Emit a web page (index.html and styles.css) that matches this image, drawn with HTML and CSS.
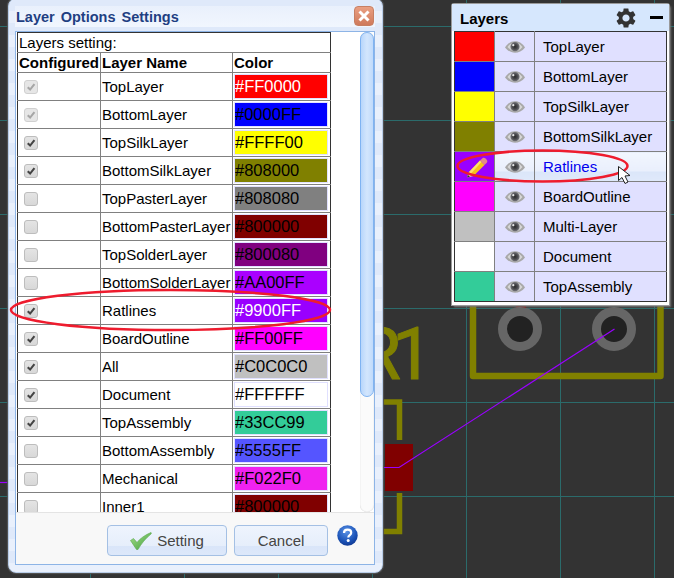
FILE: index.html
```html
<!DOCTYPE html>
<html lang="en">
<head>
<meta charset="utf-8">
<title>Layer Options Settings</title>
<link rel="stylesheet" href="styles.css">
</head>
<body>
<svg class="defs" width="0" height="0" aria-hidden="true">
  <defs>
    <symbol id="tick" viewBox="0 0 14 14"><path d="M3.2 7.2 6 10 11 3.6" fill="none" stroke="currentColor" stroke-width="2.4"/></symbol>
    <radialGradient id="iris"><stop offset="0" stop-color="#2c2c2c"/><stop offset=".55" stop-color="#4a4a4e"/><stop offset="1" stop-color="#77777c"/></radialGradient>
    <symbol id="eye" viewBox="0 0 20 12">
      <path d="M0 6.4C3 1.8 6.5 .3 10 .3s7 1.5 10 6.1c-3 3.8-6.500 5.300-10 5.300S3 10.200 0 6.400Z" fill="#a8a8a8"/>
      <path d="M2.500 6C5 2.700 7.500 1.800 10 1.800s5 .9 7.500 4.200C15 9 12.500 10 10 10S5 9 2.500 6Z" fill="#d6d6d6"/>
      <circle cx="10" cy="5.700" r="4.600" fill="url(#iris)"/>
      <circle cx="8.300" cy="4.200" r="1.100" fill="#e8e8e8"/>
    </symbol>
  </defs>
</svg>

<main class="canvas">
  <svg class="board" width="674" height="578" viewBox="0 0 674 578" aria-hidden="true">
    <text class="silk-text" x="356" y="379">R<tspan x="392">1</tspan></text>
    <path class="silk" d="M473 300V376H660.500V300"/>
    <path class="silk-thin" d="M375 402H399.500V440M399.500 493V531.500H375"/>
    <rect class="pad" x="385" y="444" width="28" height="47"/>
    <rect class="pad" x="516" y="300" width="10" height="8"/>
    <circle class="ring" cx="520" cy="329" r="17.500"/>
    <circle class="ring" cx="614" cy="329" r="17.500"/>
    <path class="rat" d="M370 467.500H399L614.500 329"/>
    <path class="rat" d="M0 482.500H10"/>
  </svg>

  <section class="dialog">
    <header class="dialog-title">
      <h1>Layer Options Settings</h1>
      <button class="close" type="button" aria-label="Close"><svg width="12" height="12" viewBox="0 0 12 12"><path d="M1.500 1.500 10.500 10.500M10.500 1.500 1.500 10.500" stroke="#fff" stroke-width="3"/></svg></button>
    </header>
    <div class="frame">
      <div class="scroller">
        <table class="opts">
          <colgroup><col class="col-a"><col class="col-b"><col class="col-c"></colgroup>
          <tr class="cap"><td colspan="3">Layers setting:</td></tr>
          <tr class="head"><th>Configured</th><th>Layer Name</th><th>Color</th></tr>
          <tr><td><span class="cb off-on"><svg><use href="#tick"/></svg></span></td><td>TopLayer</td><td><div class="sw c-ff0000 light">#FF0000</div></td></tr>
          <tr><td><span class="cb off-on"><svg><use href="#tick"/></svg></span></td><td>BottomLayer</td><td><div class="sw c-0000ff">#0000FF</div></td></tr>
          <tr><td><span class="cb"><svg><use href="#tick"/></svg></span></td><td>TopSilkLayer</td><td><div class="sw c-ffff00">#FFFF00</div></td></tr>
          <tr><td><span class="cb"><svg><use href="#tick"/></svg></span></td><td>BottomSilkLayer</td><td><div class="sw c-808000">#808000</div></td></tr>
          <tr><td><span class="cb"></span></td><td>TopPasterLayer</td><td><div class="sw c-808080">#808080</div></td></tr>
          <tr><td><span class="cb"></span></td><td>BottomPasterLayer</td><td><div class="sw c-800000">#800000</div></td></tr>
          <tr><td><span class="cb"></span></td><td>TopSolderLayer</td><td><div class="sw c-800080">#800080</div></td></tr>
          <tr><td><span class="cb"></span></td><td>BottomSolderLayer</td><td><div class="sw c-aa00ff">#AA00FF</div></td></tr>
          <tr><td><span class="cb"><svg><use href="#tick"/></svg></span></td><td>Ratlines</td><td><div class="sw c-9900ff light">#9900FF</div></td></tr>
          <tr><td><span class="cb"><svg><use href="#tick"/></svg></span></td><td>BoardOutline</td><td><div class="sw c-ff00ff">#FF00FF</div></td></tr>
          <tr><td><span class="cb"><svg><use href="#tick"/></svg></span></td><td>All</td><td><div class="sw c-c0c0c0">#C0C0C0</div></td></tr>
          <tr><td><span class="cb"><svg><use href="#tick"/></svg></span></td><td>Document</td><td><div class="sw c-ffffff">#FFFFFF</div></td></tr>
          <tr><td><span class="cb"><svg><use href="#tick"/></svg></span></td><td>TopAssembly</td><td><div class="sw c-33cc99">#33CC99</div></td></tr>
          <tr><td><span class="cb"></span></td><td>BottomAssembly</td><td><div class="sw c-5555ff">#5555FF</div></td></tr>
          <tr><td><span class="cb"></span></td><td>Mechanical</td><td><div class="sw c-f022f0">#F022F0</div></td></tr>
          <tr><td><span class="cb"></span></td><td>Inner1</td><td><div class="sw c-800000">#800000</div></td></tr>
        </table>
        <div class="track"><div class="thumb"></div></div>
      </div>
      <footer class="actions">
        <button class="btn btn-set" type="button">
          <svg width="22" height="18" viewBox="0 0 22 18"><defs><linearGradient id="chk" x1="0" y1="0" x2="1" y2="1"><stop offset="0" stop-color="#a8e08c"/><stop offset="1" stop-color="#3f9e3c"/></linearGradient></defs><path d="M.5 8.500 3.500 6.500 7 10.500C10 6.500 15 3 21 .5 21.500.8 21.500 1.500 21 2 15 7 11.500 11.500 8 17.500L6.500 17.500Z" fill="url(#chk)" stroke="#5aa84e" stroke-width=".6"/></svg>
          <span>Setting</span>
        </button>
        <button class="btn btn-cancel" type="button">Cancel</button>
        <svg class="help" width="21" height="21" viewBox="0 0 21 21"><defs><radialGradient id="hb" cx=".45" cy=".3" r=".8"><stop offset="0" stop-color="#5b93e6"/><stop offset=".6" stop-color="#1c54b8"/><stop offset="1" stop-color="#0c2f84"/></radialGradient></defs><circle cx="10.500" cy="10.500" r="10.200" fill="url(#hb)"/><path d="M7 8C7 5.800 8.500 4.700 10.600 4.700 12.800 4.700 14.200 5.900 14.200 7.700 14.200 10 11.300 10.200 11.300 12.500" fill="none" stroke="#fff" stroke-width="2.200"/><circle cx="11.200" cy="15.400" r="1.500" fill="#fff"/></svg>
      </footer>
    </div>
  </section>

  <section class="layers">
    <header class="layers-head">
      <h2>Layers</h2>
      <svg class="gear" width="24" height="24" viewBox="0 0 24 24"><path d="M19.14 12.94c.04-.3.06-.61.06-.94 0-.32-.02-.64-.07-.94l2.03-1.58c.18-.14.23-.41.12-.61l-1.92-3.32c-.12-.22-.37-.29-.59-.22l-2.39.96c-.5-.38-1.03-.7-1.62-.94l-.36-2.54c-.04-.24-.24-.41-.48-.41h-3.84c-.24 0-.43.17-.47.41l-.36 2.54c-.59.24-1.13.57-1.62.94l-2.39-.96c-.22-.08-.47 0-.59.22L2.74 8.870c-.12.21-.08.47.12.61l2.03 1.58c-.05.3-.09.63-.09.94s.02.64.07.94l-2.03 1.58c-.18.14-.23.41-.12.61l1.92 3.32c.12.22.37.29.59.22l2.39-.96c.5.38 1.03.7 1.62.94l.36 2.54c.05.24.24.41.48.41h3.840c.24 0 .44-.17.47-.41l.36-2.54c.59-.24 1.13-.56 1.62-.94l2.39.96c.22.08.47 0 .59-.22l1.92-3.32c.12-.22.07-.47-.12-.61l-2.010-1.58zM12 15.600c-1.980 0-3.600-1.620-3.600-3.600s1.620-3.600 3.600-3.600 3.600 1.620 3.600 3.600-1.620 3.600-3.600 3.600z" fill="#333"/></svg>
      <span class="minus"></span>
    </header>
    <table class="ltab">
      <colgroup><col class="l-a"><col class="l-b"><col class="l-c"></colgroup>
      <tr><td class="c-ff0000"></td><td class="e"><svg class="eye"><use href="#eye"/></svg></td><td>TopLayer</td></tr>
      <tr><td class="c-0000ff"></td><td class="e"><svg class="eye"><use href="#eye"/></svg></td><td>BottomLayer</td></tr>
      <tr><td class="c-ffff00"></td><td class="e"><svg class="eye"><use href="#eye"/></svg></td><td>TopSilkLayer</td></tr>
      <tr><td class="c-808000"></td><td class="e"><svg class="eye"><use href="#eye"/></svg></td><td>BottomSilkLayer</td></tr>
      <tr class="active">
        <td class="c-9900ff pencil-cell">
          <svg class="pencil" width="22" height="22" viewBox="0 0 22 22"><path d="M1 20.500 3 15 7.500 19Z" fill="#f3dfb0"/><path d="M1 20.500 2 18 4 19.800Z" fill="#333"/><path d="M3 15 14 3.500 18.500 8 7.500 19Z" fill="#f7c21d"/><path d="M3 15 14 3.500 15.500 5 5 16.500Z" fill="#fde36a"/><path d="M14 3.500 16.500 1.200C17.500.4 18.500.6 19.500 1.500L20.700 2.800C21.500 3.800 21.500 4.800 20.800 5.700L18.500 8Z" fill="#e58a86"/></svg>
        </td>
        <td class="e"><svg class="eye"><use href="#eye"/></svg></td><td>Ratlines</td>
      </tr>
      <tr><td class="c-ff00ff"></td><td class="e"><svg class="eye"><use href="#eye"/></svg></td><td>BoardOutline</td></tr>
      <tr><td class="c-c0c0c0"></td><td class="e"><svg class="eye"><use href="#eye"/></svg></td><td>Multi-Layer</td></tr>
      <tr><td class="c-ffffff"></td><td class="e"><svg class="eye"><use href="#eye"/></svg></td><td>Document</td></tr>
      <tr><td class="c-33cc99"></td><td class="e"><svg class="eye"><use href="#eye"/></svg></td><td>TopAssembly</td></tr>
    </table>
  </section>

  <svg class="notes" width="674" height="578" viewBox="0 0 674 578" aria-hidden="true">
    <ellipse cx="170.500" cy="310" rx="159.500" ry="20"/>
    <ellipse cx="542.500" cy="166" rx="85" ry="15.500"/>
    <path class="cursor" d="M618.500 166.500V180.500L622 177.500 625 183.500 628 182 625 176 630 175.500Z"/>
  </svg>
</main>
</body>
</html>
```
FILE: styles.css
```css
* { box-sizing: border-box; }
html, body { margin: 0; padding: 0; }
body { font-family: "Liberation Sans", Arial, sans-serif; background: #333; }
.defs { position: absolute; }

.canvas {
  position: relative;
  width: 674px;
  height: 578px;
  overflow: hidden;
  background-color: #333;
  background-image:
    linear-gradient(#2b6b6b 0 1px, transparent 1px),
    linear-gradient(90deg, #2b6b6b 0 1px, transparent 1px);
  background-size: 94px 94px;
  background-position: 90px 26px;
}

.board, .notes { position: absolute; left: 0; top: 0; }
.notes { pointer-events: none; }
.notes ellipse { fill: none; stroke: #ee1c2e; stroke-width: 2.500; }
.notes .cursor { fill: #fff; stroke: #222; stroke-width: 1; }

.silk { fill: none; stroke: #808000; stroke-width: 6.500; stroke-linejoin: round; }
.silk-thin { fill: none; stroke: #808000; stroke-width: 5.500; }
.silk-text { font-family: Roboto, "Liberation Sans", sans-serif; font-size: 73px; fill: #808000; stroke: #808000; stroke-width: 1; stroke-linejoin: round; }
.pad { fill: #800000; }
.ring { fill: #222; stroke: #666; stroke-width: 9; }
.rat { fill: none; stroke: #9900ff; stroke-width: 1.200; }

/* dialog */
.dialog {
  position: absolute;
  left: 8px;
  top: -2px;
  width: 375px;
  height: 575px;
  display: flex;
  flex-direction: column;
  padding: 0 7px 7px 6px;
  border-radius: 8px;
  border: 1px solid #b9cde8;
  box-shadow: 0 0 1px 1px #555;
  background: repeating-linear-gradient(#dfe9fa 0 12px, #e9f0fc 12px 24px);
}
.dialog-title {
  height: 32px;
  flex: none;
  padding-left: 1px;
  display: flex;
  align-items: center;
  justify-content: space-between;
  background: linear-gradient(transparent 7px, #e9f0fc 7px, #f1f6fe 28px, transparent 28px);
}
.dialog-title h1 {
  margin: 3px 0 0;
  font-size: 14.500px;
  font-weight: bold;
  color: #1f3f82;
  word-spacing: 2px;
}
.close {
  width: 20px;
  height: 20px;
  padding: 0;
  margin: 2px 1px 0 0;
  display: flex;
  align-items: center;
  justify-content: center;
  border: 1px solid #c77f63;
  border-radius: 4px;
  background: linear-gradient(#ea9f82, #cf7a5c);
}

.frame {
  flex: 1;
  min-height: 0;
  display: flex;
  flex-direction: column;
  border: 1px solid #8db4e6;
  background: #fff;
}
.scroller {
  position: relative;
  height: 480px;
  flex: none;
  overflow: hidden;
  padding: 0 0 0 1px;
}

.opts {
  border-collapse: collapse;
  table-layout: fixed;
  width: 314px;
  border: 1px solid #333;
  font-size: 15px;
  color: #000;
  background: #fff;
}
.col-a { width: 83px; }
.col-b { width: 132px; }
.col-c { width: 98px; }
.opts td, .opts th { border: 1px solid #808080; padding: 0 1px; text-align: left; white-space: nowrap; overflow: hidden; }
.opts tr { height: 28px; }
.opts .cap, .opts .head { height: 20px; }
.opts .cap td { border-top-color: #333; }
.opts th { font-weight: bold; }
.opts td:last-child, .opts th:last-child { border-right-color: #333; }
.opts td:first-child, .opts th:first-child { border-left-color: #333; }

.cb {
  display: block;
  width: 14px;
  height: 14px;
  margin-left: 5px;
  border: 1px solid #bdbdbd;
  border-radius: 3px;
  background: linear-gradient(#e4e4e4, #d8d8d8);
  color: #444;
}
.cb svg { display: block; width: 12px; height: 12px; }
.cb.off-on { color: #a6a6a6; background: #e6e6e6; border-color: #d0d0d0; }

.sw {
  width: 94px;
  height: 25px;
  border: 1px solid #e0e0ff;
  font-size: 16.500px;
  line-height: 23px;
  color: #000;
  white-space: nowrap;
  overflow: hidden;
}
.light { color: #fff; }
.c-ff0000 { background: #ff0000; }
.c-0000ff { background: #0000ff; }
.c-ffff00 { background: #ffff00; }
.c-808000 { background: #808000; }
.c-808080 { background: #808080; }
.c-800000 { background: #800000; }
.c-800080 { background: #800080; }
.c-aa00ff { background: #aa00ff; }
.c-9900ff { background: #9900ff; }
.c-ff00ff { background: #ff00ff; }
.c-c0c0c0 { background: #c0c0c0; }
.c-ffffff { background: #ffffff; }
.c-33cc99 { background: #33cc99; }
.c-5555ff { background: #5555ff; }
.c-f022f0 { background: #f022f0; }

.track {
  position: absolute;
  left: 344px;
  top: 0;
  width: 14px;
  height: 480px;
  border-radius: 7px;
  background: #fbfbfb;
  box-shadow: inset 0 0 1px #bbb;
}
.thumb {
  height: 365px;
  border: 1px solid #7fb3f2;
  border-radius: 7px;
  background: linear-gradient(90deg, #b8d6fb, #d3e6fd 50%, #c0dafb);
}

.actions {
  flex: 1;
  display: flex;
  align-items: flex-start;
  padding: 12px 0 0 91px;
  background: #f8f8f8;
  border-top: 1px solid #e4e4e4;
}
.btn {
  height: 31px;
  display: flex;
  align-items: center;
  justify-content: center;
  padding: 0;
  border: 1px solid #a4c0e4;
  border-radius: 4px;
  background: linear-gradient(#eef4fd 0, #e6eefb 68%, #d9e5f9 68%, #dde8fa 100%);
  font: 15px "Liberation Sans", Arial, sans-serif;
  color: #444;
}
.btn-set { width: 120px; gap: 5px; }
.btn-cancel { width: 94px; margin-left: 7px; }
.help { margin: 0 0 0 9px; }

/* layers panel */
.layers {
  position: absolute;
  left: 452px;
  top: 4px;
  width: 217px;
  height: 301px;
  display: flex;
  flex-direction: column;
  padding: 0 2px 2px;
  background: #fff;
  border-radius: 2px 2px 0 0;
  box-shadow: 0 0 0 1px #999, 2px 2px 2px #777;
}
.layers-head {
  height: 27px;
  margin: 0 -2px;
  padding: 0 6px 0 8px;
  display: flex;
  align-items: center;
  background: #d6e7fd;
  flex: none;
}
.layers-head h2 { margin: 2px 0 0; font-size: 15px; font-weight: bold; color: #000; flex: 1; }
.gear { margin: 1px 12px 0 0; }
.minus { width: 13px; height: 3px; background: #000; }

.ltab {
  border-collapse: collapse;
  table-layout: fixed;
  width: 212px;
  border: 1px solid #333;
  font-size: 15px;
  background: #e0e0ff;
  color: #000;
}
.l-a { width: 40px; }
.l-b { width: 40px; }
.l-c { width: 132px; }
.ltab tr { height: 30px; }
.ltab td { border: 1px solid #808080; padding: 0 0 0 8px; white-space: nowrap; }
.ltab tr:first-child td { border-top-color: #333; }
.ltab tr:last-child td { border-bottom-color: #333; }
.ltab td:first-child { border-left-color: #333; }
.ltab td:last-child { border-right-color: #333; }
.ltab .e { padding: 0; }
.eye { display: block; width: 20px; height: 12px; margin: 0 auto; }
.ltab .active td:last-child { color: #0000ee; }
.ltab .active td:not(:first-child) { background: linear-gradient(#f2f6fe 0, #e9effc 65%, #dbe6f9 65%, #e0e9fa 100%); }
.ltab .pencil-cell { padding: 0; }
.pencil { display: block; margin: 2px 0 0 11px; }
```
